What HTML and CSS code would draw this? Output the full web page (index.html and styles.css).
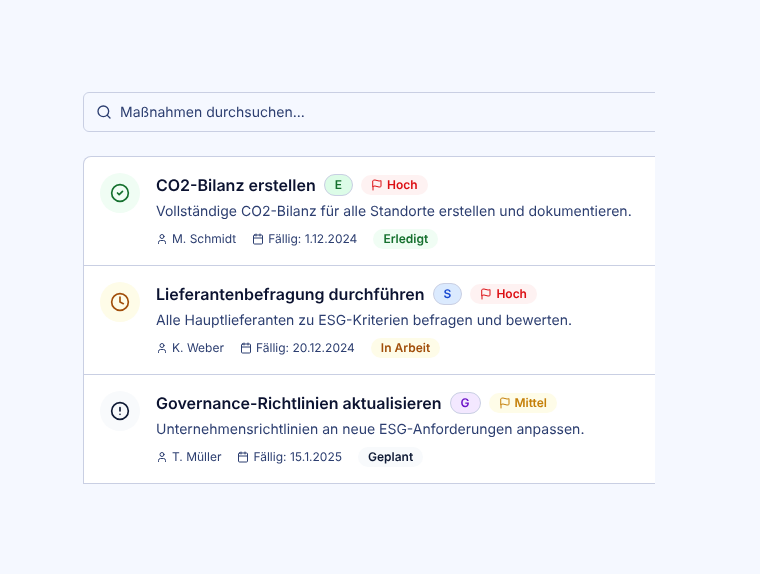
FILE: index.html
```html
<!DOCTYPE html>
<html lang="de">
<head>
    <meta charset="UTF-8">
    <meta name="viewport" content="width=device-width, initial-scale=1.0">
    <title>Maßnahmen</title>
    <link rel="stylesheet" href="styles.css">
</head>
<body>
    <main class="panel">
        <div class="panel-inner">
            <div class="search">
                <svg class="search-icon" viewBox="0 0 24 24"><circle cx="11" cy="11" r="8"/><path d="m21 21-4.3-4.3"/></svg>
                <span>Maßnahmen durchsuchen...</span>
            </div>

            <div class="list">
                <div class="row">
                    <div class="status-icon done">
                        <svg viewBox="0 0 24 24"><circle cx="12" cy="12" r="10"/><path d="m9 12 2 2 4-4"/></svg>
                    </div>
                    <div class="row-body">
                        <div class="title-line">
                            <h3>CO2-Bilanz erstellen</h3>
                            <span class="cat cat-e">E</span>
                            <span class="prio prio-high">
                                <svg viewBox="0 0 24 24"><path d="M4 15s1-1 4-1 5 2 8 2 4-1 4-1V3s-1 1-4 1-5-2-8-2-4 1-4 1z"/><path d="M4 22v-7"/></svg>
                                Hoch
                            </span>
                        </div>
                        <p>Vollständige CO2-Bilanz für alle Standorte erstellen und dokumentieren.</p>
                        <div class="meta">
                            <span class="meta-item">
                                <svg viewBox="0 0 24 24"><path d="M19 21v-2a4 4 0 0 0-4-4H9a4 4 0 0 0-4 4v2"/><circle cx="12" cy="7" r="4"/></svg>
                                M. Schmidt
                            </span>
                            <span class="meta-item">
                                <svg viewBox="0 0 24 24"><path d="M8 2v4"/><path d="M16 2v4"/><rect x="3" y="4" width="18" height="18" rx="2"/><path d="M3 10h18"/></svg>
                                Fällig: 1.12.2024
                            </span>
                            <span class="state state-done">Erledigt</span>
                        </div>
                    </div>
                </div>

                <div class="row">
                    <div class="status-icon progress">
                        <svg viewBox="0 0 24 24"><circle cx="12" cy="12" r="10"/><path d="M12 6v6l4 2"/></svg>
                    </div>
                    <div class="row-body">
                        <div class="title-line">
                            <h3>Lieferantenbefragung durchführen</h3>
                            <span class="cat cat-s">S</span>
                            <span class="prio prio-high">
                                <svg viewBox="0 0 24 24"><path d="M4 15s1-1 4-1 5 2 8 2 4-1 4-1V3s-1 1-4 1-5-2-8-2-4 1-4 1z"/><path d="M4 22v-7"/></svg>
                                Hoch
                            </span>
                        </div>
                        <p>Alle Hauptlieferanten zu ESG-Kriterien befragen und bewerten.</p>
                        <div class="meta">
                            <span class="meta-item">
                                <svg viewBox="0 0 24 24"><path d="M19 21v-2a4 4 0 0 0-4-4H9a4 4 0 0 0-4 4v2"/><circle cx="12" cy="7" r="4"/></svg>
                                K. Weber
                            </span>
                            <span class="meta-item">
                                <svg viewBox="0 0 24 24"><path d="M8 2v4"/><path d="M16 2v4"/><rect x="3" y="4" width="18" height="18" rx="2"/><path d="M3 10h18"/></svg>
                                Fällig: 20.12.2024
                            </span>
                            <span class="state state-progress">In Arbeit</span>
                        </div>
                    </div>
                </div>

                <div class="row">
                    <div class="status-icon planned">
                        <svg viewBox="0 0 24 24"><circle cx="12" cy="12" r="10"/><path d="M12 8v4"/><path d="M12 16h.01"/></svg>
                    </div>
                    <div class="row-body">
                        <div class="title-line">
                            <h3>Governance-Richtlinien aktualisieren</h3>
                            <span class="cat cat-g">G</span>
                            <span class="prio prio-mid">
                                <svg viewBox="0 0 24 24"><path d="M4 15s1-1 4-1 5 2 8 2 4-1 4-1V3s-1 1-4 1-5-2-8-2-4 1-4 1z"/><path d="M4 22v-7"/></svg>
                                Mittel
                            </span>
                        </div>
                        <p>Unternehmensrichtlinien an neue ESG-Anforderungen anpassen.</p>
                        <div class="meta">
                            <span class="meta-item">
                                <svg viewBox="0 0 24 24"><path d="M19 21v-2a4 4 0 0 0-4-4H9a4 4 0 0 0-4 4v2"/><circle cx="12" cy="7" r="4"/></svg>
                                T. Müller
                            </span>
                            <span class="meta-item">
                                <svg viewBox="0 0 24 24"><path d="M8 2v4"/><path d="M16 2v4"/><rect x="3" y="4" width="18" height="18" rx="2"/><path d="M3 10h18"/></svg>
                                Fällig: 15.1.2025
                            </span>
                            <span class="state state-planned">Geplant</span>
                        </div>
                    </div>
                </div>
            </div>
        </div>
    </main>
</body>
</html>
```

FILE: styles.css
```css
body {
    font-family: Inter, "Liberation Sans", sans-serif;
    background-color: #f5f8ff;
    margin: 0;
    padding: 0;
    height: 574px;
    overflow: hidden;
    text-rendering: geometricPrecision;
}
svg {
    fill: none;
    stroke: currentColor;
    stroke-width: 2;
    stroke-linecap: round;
    stroke-linejoin: round;
    flex-shrink: 0;
}
.panel {
    width: 572px;
    margin: 92px 0 0 83px;
    overflow: hidden;
    will-change: transform;
}
.panel-inner {
    width: 640px;
}
.search {
    display: flex;
    align-items: center;
    gap: 8px;
    height: 38px;
    padding: 0 12px;
    border: 1px solid #c9cfe3;
    border-radius: 6px;
    color: #2c3e70;
    font-size: 14px;
    line-height: 21px;
}
.search-icon {
    width: 16px;
    height: 16px;
    color: #2c3e70;
}
.list {
    margin-top: 24px;
    background: #ffffff;
    border: 1px solid #c9cfe3;
    border-radius: 8px 0 0 0;
    border-bottom: none;
}
.row {
    display: flex;
    gap: 16px;
    padding: 16px;
    height: 76px;
    border-bottom: 1px solid #c9cfe3;
}
.status-icon {
    width: 40px;
    height: 40px;
    border-radius: 50%;
    display: flex;
    align-items: center;
    justify-content: center;
    flex-shrink: 0;
}
.status-icon svg {
    width: 20px;
    height: 20px;
}
.status-icon.done { background: #f0fdf4; color: #15702e; }
.status-icon.progress { background: #fefce8; color: #a14e0a; }
.status-icon.planned { background: #f8fafc; color: #0f1a35; }
.title-line {
    display: flex;
    align-items: center;
    gap: 8px;
    height: 24px;
}
.title-line h3 {
    margin: 0;
    font-size: 16px;
    line-height: 24px;
    font-weight: 600;
    color: #0b1230;
}
.cat {
    padding: 0 10px;
    height: 20px;
    line-height: 20px;
    border: 1px solid #c9cfe3;
    border-radius: 11px;
    font-size: 12px;
    font-weight: 600;
}
.cat-e { background: #dcfce7; color: #15702e; }
.cat-s { background: #dbeafe; color: #1848d0; }
.cat-g { background: #f3e8ff; color: #6d14c8; }
.prio {
    display: flex;
    align-items: center;
    gap: 4px;
    height: 20px;
    line-height: 16px;
    padding: 0 10px;
    border-radius: 10px;
    font-size: 12px;
    font-weight: 600;
}
.prio svg {
    width: 12px;
    height: 12px;
}
.prio-high { background: #fef2f2; color: #dc0f14; }
.prio-mid { background: #fefce8; color: #c57f08; }
.row-body p {
    margin: 5px 0 0 0;
    font-size: 14px;
    line-height: 20px;
    color: #2c3e70;
}
.meta {
    display: flex;
    align-items: center;
    gap: 16px;
    margin-top: 7px;
    font-size: 12px;
    line-height: 16px;
    color: #2c3e70;
}
.meta-item {
    display: flex;
    align-items: center;
    gap: 4px;
}
.meta-item svg {
    width: 12px;
    height: 12px;
}
.state {
    height: 20px;
    line-height: 20px;
    padding: 0 10px;
    border-radius: 10px;
    font-weight: 600;
}
.state-done { background: #f0fdf4; color: #15702e; }
.state-progress { background: #fefce8; color: #a14e0a; }
.state-planned { background: #f8fafc; color: #0f1a35; }
```
